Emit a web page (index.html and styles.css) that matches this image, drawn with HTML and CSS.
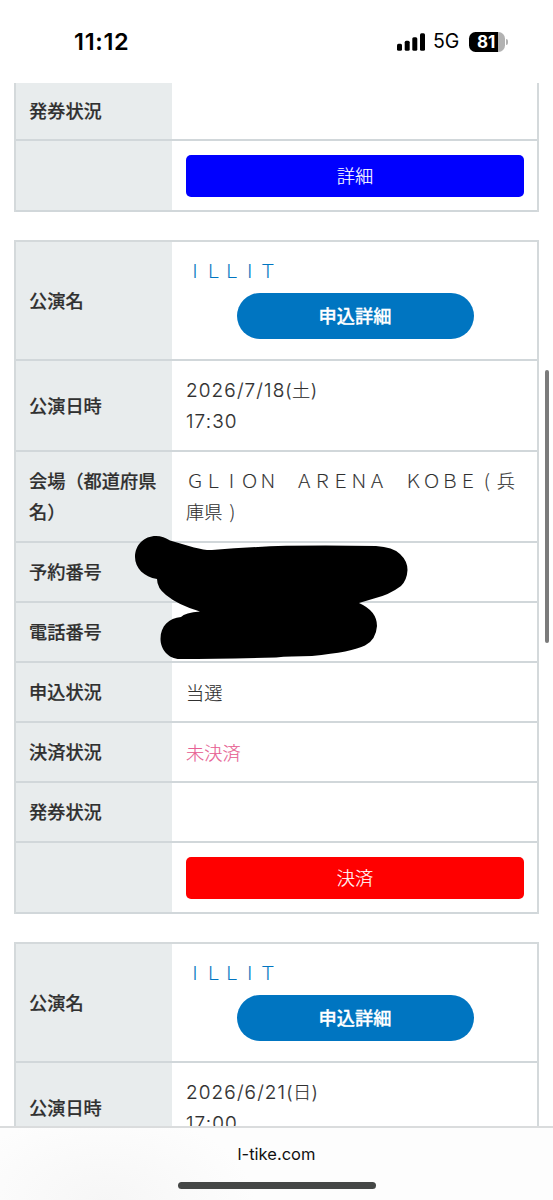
FILE: index.html
```html
<!DOCTYPE html>
<html lang="ja">
<head>
<meta charset="utf-8">
<title>l-tike.com</title>
<link rel="stylesheet" href="styles.css">
</head>
<body>
<div class="screen">
  <header class="status">
    <div class="clock">11:12</div>
    <div class="indicators">
      <svg class="signal" width="28" height="18" viewBox="0 0 28 18">
        <rect x="0" y="10.8" width="5" height="7" rx="1.5"/>
        <rect x="7.7" y="7.8" width="5" height="10" rx="1.5"/>
        <rect x="15.3" y="4.2" width="5" height="13.6" rx="1.5"/>
        <rect x="23" y="0.2" width="5" height="17.6" rx="1.5"/>
      </svg>
      <span class="network">5G</span>
      <div class="battery"><span class="battery-level">81</span><i class="battery-tip"></i></div>
    </div>
  </header>

  <main class="page">
    <section class="card card-first">
      <div class="row row-cut"><div class="label">発券状況</div><div class="value"></div></div>
      <div class="row row-action"><div class="label"></div><div class="value"><a class="button button-detail">詳細</a></div></div>
    </section>

    <section class="card">
      <div class="row row-title"><div class="label">公演名</div><div class="value"><a class="title"><span class="wide">I</span>ＬＬ<span class="wide">I</span>Ｔ</a><a class="pill">申込詳細</a></div></div>
      <div class="row row-double row-date"><div class="label">公演日時</div><div class="value"><span class="date">2026/7/18<span class="day">(土)</span><br>17:30</span></div></div>
      <div class="row row-double"><div class="label">会場（都道府県<br>名）</div><div class="value"><span class="venue">ＧＬ<span class="wide">I</span>ＯＮ　ＡＲＥＮＡ　ＫＯＢＥ ( 兵<br>庫県 )</span></div></div>
      <div class="row"><div class="label">予約番号</div><div class="value"></div></div>
      <div class="row"><div class="label">電話番号</div><div class="value"></div></div>
      <div class="row"><div class="label">申込状況</div><div class="value">当選</div></div>
      <div class="row"><div class="label">決済状況</div><div class="value unpaid">未決済</div></div>
      <div class="row"><div class="label">発券状況</div><div class="value"></div></div>
      <div class="row row-action"><div class="label"></div><div class="value"><a class="button button-pay">決済</a></div></div>
      <svg class="scribble" width="280" height="130" viewBox="130 530 280 130">
        <path d="M156 536C161 536 166 538 170 540.500L194 547.500Q206 550.500 212 550Q250 547 286 545.800Q330 545 376 546Q393 547 400 554Q407.500 561 407.500 570Q407 580 401 586Q389 595 374 598.500L359 603Q377 611 377 626Q376 640 365 645.500Q352 652 312 656Q290 656 276 657.500Q220 659 180 659C168 659 160.500 649 160.500 639C160.500 626 169 618 181 617Q185 612.500 200 611.500Q178 605 166 595Q157 588 157 579C144 577 135 568 135 557C135 545 144 536 156 536Z"/>
      </svg>
    </section>

    <section class="card">
      <div class="row row-title"><div class="label">公演名</div><div class="value"><a class="title"><span class="wide">I</span>ＬＬ<span class="wide">I</span>Ｔ</a><a class="pill">申込詳細</a></div></div>
      <div class="row row-double row-date"><div class="label">公演日時</div><div class="value"><span class="date">2026/6/21<span class="day">(日)</span><br>17:00</span></div></div>
    </section>
    <div class="scrollbar"></div>
  </main>

  <footer class="browser-bar">
    <div class="address">l-tike.com</div>
    <div class="home-indicator"></div>
  </footer>
</div>
</body>
</html>
```
FILE: styles.css
```css
* { box-sizing: border-box; }

body {
  margin: 0;
  background: #fff;
  color: #303030;
  font-family: "Noto Sans CJK JP", sans-serif;
  font-size: 18.2px;
  font-weight: 300;
  line-height: 31px;
}

.screen {
  display: flex;
  flex-direction: column;
  height: 1200px;
  overflow: hidden;
}

.status {
  flex: none;
  display: flex;
  justify-content: space-between;
  height: 83px;
  padding: 26px 48px 0 74px;
  color: #000;
  font-family: Inter, sans-serif;
}

.clock { font-size: 23.500px; font-weight: 600; letter-spacing: 0.700px; }

.indicators { display: flex; align-items: center; height: 31px; }
.signal { margin-right: 8px; }
.network { width: 36px; font-size: 19.500px; font-weight: 400; }

.battery {
  position: relative;
  width: 36px;
  height: 20px;
  border-radius: 6.5px;
  background: linear-gradient(90deg, #000 29px, #b2b2b2 29px);
}
.battery-level {
  display: block;
  padding-right: 1.500px;
  color: #fff;
  font-size: 17px;
  font-weight: 700;
  line-height: 20px;
  text-align: center;
}
.battery-tip {
  position: absolute;
  top: 7px;
  right: -2.500px;
  width: 2px;
  height: 6px;
  border-radius: 0 2px 2px 0;
  background: #b2b2b2;
}

.page {
  position: relative;
  flex: 1;
  min-height: 0;
  overflow: hidden;
  padding: 0 14px;
}

.card {
  position: relative;
  margin-bottom: 28px;
  border: solid #d4d9db;
  border-width: 2px 2px 0;
}
.card-first { border-top: 0; }

.row {
  display: grid;
  grid-template-columns: 156px 1fr;
  height: 60px;
  border-bottom: 2px solid #d1d7da;
}
.row-cut { height: 58px; }
.row-action { height: 71px; }
.row-title { height: 119px; }
.row-double { height: 91px; }

.label {
  display: flex;
  align-items: center;
  padding: 0 0 2px 13px;
  background: #e8eced;
  font-weight: 500;
  -webkit-text-stroke: 0.2px;
  white-space: nowrap;
}
.row-title .label,
.row-date .label { padding-bottom: 0; }

.value {
  display: flex;
  flex-direction: column;
  justify-content: center;
  padding: 0 13px 0 14px;
  -webkit-text-stroke: 0.15px;
  white-space: nowrap;
}
.row-double .value { padding-bottom: 1px; }
.row-date .value { padding-bottom: 0; }

.title { margin-top: -2px; color: #0075c1; }

.wide {
  display: inline-block;
  width: 1em;
  text-align: center;
}

.pill {
  align-self: center;
  width: 237px;
  height: 46px;
  margin: 7px 0 6px;
  border-radius: 23px;
  background: #0075c1;
  color: #fff;
  font-weight: 500;
  -webkit-text-stroke: 0.3px;
  line-height: 44px;
  text-align: center;
}

.date {
  padding-top: 1px;
  font-family: Inter, "Noto Sans CJK JP", sans-serif;
  font-size: 19px;
  letter-spacing: 1.100px;
}
.day { font-size: 18.2px; letter-spacing: 0.400px; }
.venue { word-spacing: 3px; }
.unpaid { color: #e75f93; }

.button {
  height: 42px;
  border-radius: 5px;
  color: #fff;
  line-height: 41px;
  text-align: center;
}
.button-detail { background: #00f; }
.button-pay { background: #f00; }

.scribble { position: absolute; top: 288px; left: 114px; }

.scrollbar {
  position: absolute;
  top: 287px;
  right: 4px;
  width: 4px;
  height: 273px;
  border-radius: 2px;
  background: #7b7b7b;
}

.browser-bar {
  flex: none;
  display: flex;
  flex-direction: column;
  align-items: center;
  height: 74px;
  border-top: 2px solid #dadcdd;
  background: radial-gradient(ellipse 150px 90px at 105px 74px, #f6f6f6, #fdfdfd);
}
.address {
  margin-top: 11px;
  color: #111;
  font-family: Inter, sans-serif;
  font-size: 16.5px;
  font-weight: 400;
}
.home-indicator {
  width: 198px;
  height: 7px;
  margin-top: 12px;
  border-radius: 4px;
  background: #454746;
}
```
